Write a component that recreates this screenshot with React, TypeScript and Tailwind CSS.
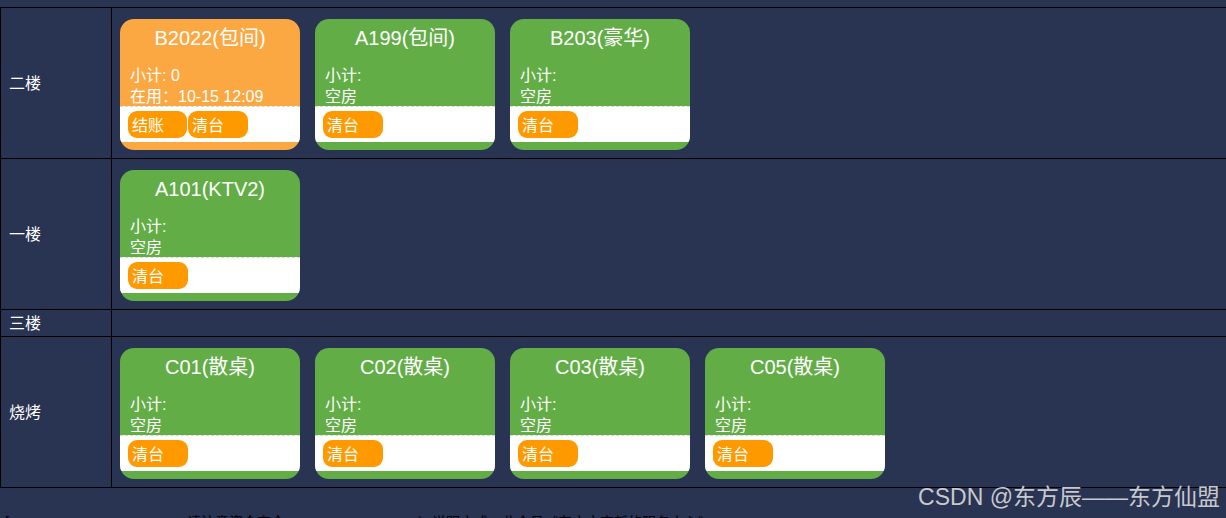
import React from "react";

type Room = {
  name: string;
  busy?: boolean;
  subtotal?: string;
  status: string;
};

const floors: { label: string; rooms: Room[]; small?: boolean }[] = [
  {
    label: "二楼",
    rooms: [
      { name: "B2022(包间)", busy: true, subtotal: " 0", status: "在用：10-15 12:09" },
      { name: "A199(包间)", status: "空房" },
      { name: "B203(豪华)", status: "空房" },
    ],
  },
  { label: "一楼", rooms: [{ name: "A101(KTV2)", status: "空房" }] },
  { label: "三楼", rooms: [], small: true },
  {
    label: "烧烤",
    rooms: [
      { name: "C01(散桌)", status: "空房" },
      { name: "C02(散桌)", status: "空房" },
      { name: "C03(散桌)", status: "空房" },
      { name: "C05(散桌)", status: "空房" },
    ],
  },
];

const font = { fontFamily: '"Liberation Sans", Arial, "Noto Sans CJK SC", sans-serif' };

function Card({ room }: { room: Room }) {
  return (
    <div
      className={`w-[180px] h-[131px] rounded-[14px] overflow-hidden flex flex-col text-white ${
        room.busy ? "bg-[#fba742]" : "bg-[#63ad47]"
      }`}
    >
      <div className="h-[38px] text-[20px] leading-[38px] text-center">{room.name}</div>
      <div className="h-[49px] pt-[8px] px-[10px] text-[16px] leading-[21px]">
        <div>小计:{room.subtotal ?? ""}</div>
        <div>{room.status}</div>
      </div>
      <div className="h-[36px] bg-white border-t border-dashed border-[#d4dccf] px-[8px] pt-[4px] flex gap-px">
        {room.busy && (
          <div className="w-[59px] h-[27px] rounded-[9px] bg-[#ff9900] text-[16px] leading-[30px] pl-[4px]">
            结账
          </div>
        )}
        <div className="w-[60px] h-[27px] rounded-[9px] bg-[#ff9900] text-[16px] leading-[30px] pl-[4px]">
          清台
        </div>
      </div>
    </div>
  );
}

export default function App() {
  return (
    <div className="relative w-[1226px] h-[518px] overflow-hidden bg-[#293352]" style={font}>
      <div className="pt-[7px]">
        <div className="w-[1260px] border-t border-black">
          {floors.map((f) => (
            <div key={f.label} className="flex border-b border-black">
              <div className="w-[112px] shrink-0 border-l border-r border-black flex items-center pl-[8px] pt-[2px] text-white text-[16px]">
                {f.label}
              </div>
              <div
                className={`flex-1 flex gap-[15px] pl-[8px] ${
                  f.small ? "h-[26px]" : "h-[150px] pt-[11px]"
                }`}
              >
                {f.rooms.map((r) => (
                  <Card key={r.name} room={r} />
                ))}
              </div>
            </div>
          ))}
        </div>
        <div className="relative h-[40px] text-black text-[14px] leading-[20px]">
          <span className="absolute left-[5px] top-[24px]">[</span>
          <span className="absolute left-[187px] top-[24px]">请注意资金安全</span>
          <span className="absolute left-[418px] top-[24px]">）说明方式，此会员《东方之帝新的服务中心》</span>
        </div>
      </div>
      <div className="absolute right-[6px] top-[483px] text-[23px] leading-[28px] text-[#c8c9cc]">
        CSDN @东方辰——东方仙盟
      </div>
    </div>
  );
}
